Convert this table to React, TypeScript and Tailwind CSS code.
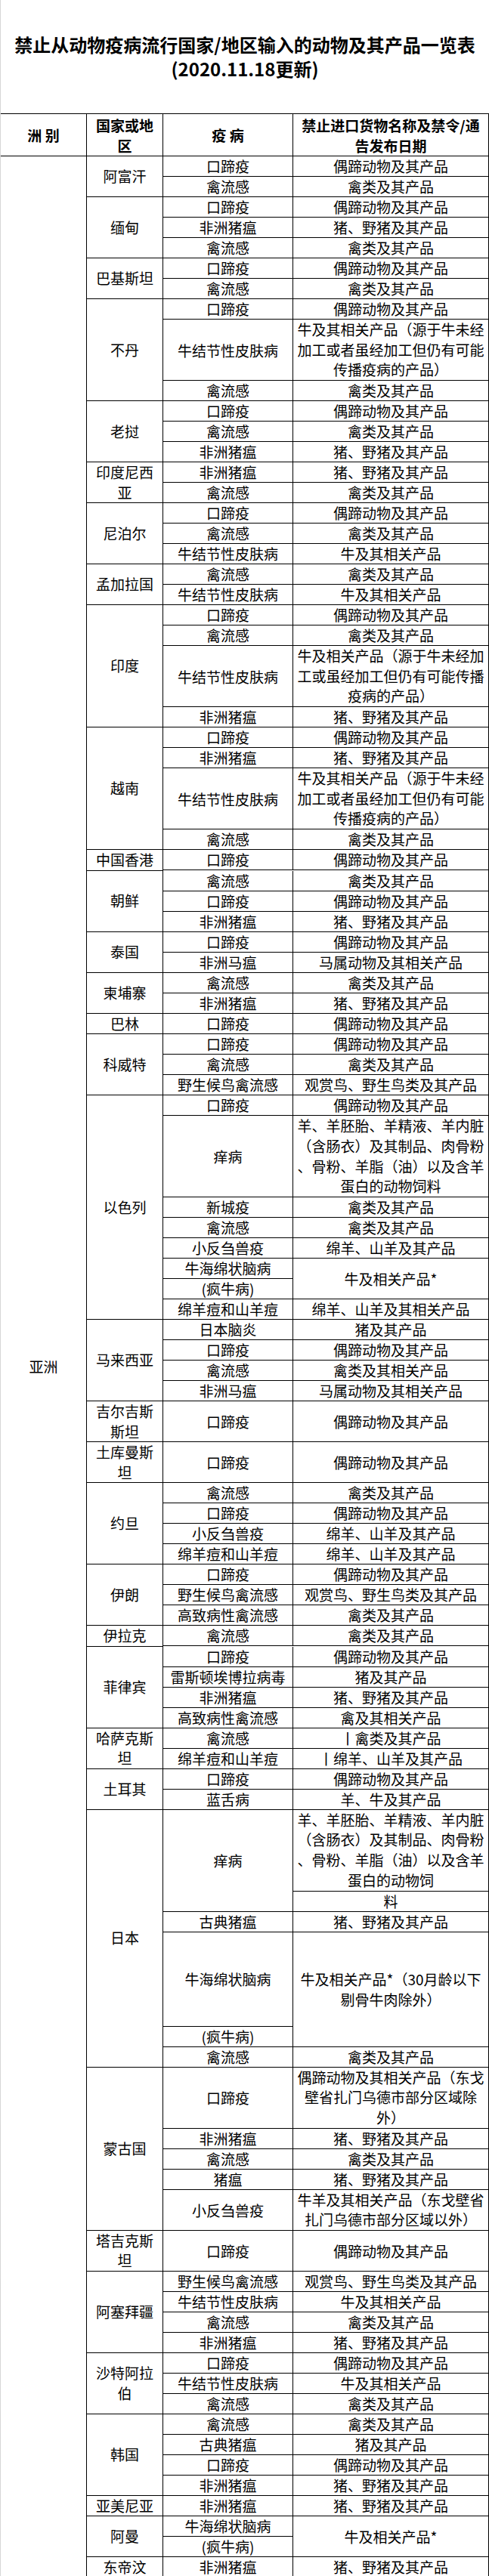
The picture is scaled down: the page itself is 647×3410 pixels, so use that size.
import React from 'react';

type Cell = { t: string; h: number };
type Row = { d: Cell[]; p: Cell[] };
type Group = { name: string; rows: Row[] };

const L = 27;

const r = (d: string, p: string, n = 1): Row => ({
  d: [{ t: d, h: n * L }],
  p: [{ t: p, h: n * L }],
});

const A = '偶蹄动物及其产品';
const B = '禽类及其产品';
const P = '猪、野猪及其产品';
const N = '牛及其相关产品';
const H = '马属动物及其相关产品';
const S = '绵羊、山羊及其产品';
const W = '观赏鸟、野生鸟类及其产品';
const LSD = '牛及其相关产品（源于牛未经\n加工或者虽经加工但仍有可能\n传播疫病的产品）';
const LSD_IN = '牛及相关产品（源于牛未经加\n工或虽经加工但仍有可能传播\n疫病的产品）';
const SCRAPIE = '羊、羊胚胎、羊精液、羊内脏\n（含肠衣）及其制品、肉骨粉\n、骨粉、羊脂（油）以及含羊\n蛋白的动物饲料';

const groups: Group[] = [
  { name: '阿富汗', rows: [r('口蹄疫', A), r('禽流感', B)] },
  { name: '缅甸', rows: [r('口蹄疫', A), r('非洲猪瘟', P), r('禽流感', B)] },
  { name: '巴基斯坦', rows: [r('口蹄疫', A), r('禽流感', B)] },
  { name: '不丹', rows: [r('口蹄疫', A), r('牛结节性皮肤病', LSD, 3), r('禽流感', B)] },
  { name: '老挝', rows: [r('口蹄疫', A), r('禽流感', B), r('非洲猪瘟', P)] },
  { name: '印度尼西\n亚', rows: [r('非洲猪瘟', P), r('禽流感', B)] },
  { name: '尼泊尔', rows: [r('口蹄疫', A), r('禽流感', B), r('牛结节性皮肤病', N)] },
  { name: '孟加拉国', rows: [r('禽流感', B), r('牛结节性皮肤病', N)] },
  { name: '印度', rows: [r('口蹄疫', A), r('禽流感', B), r('牛结节性皮肤病', LSD_IN, 3), r('非洲猪瘟', P)] },
  { name: '越南', rows: [r('口蹄疫', A), r('非洲猪瘟', P), r('牛结节性皮肤病', LSD, 3), r('禽流感', B)] },
  { name: '中国香港', rows: [r('口蹄疫', A)] },
  { name: '朝鲜', rows: [r('禽流感', B), r('口蹄疫', A), r('非洲猪瘟', P)] },
  { name: '泰国', rows: [r('口蹄疫', A), r('非洲马瘟', H)] },
  { name: '柬埔寨', rows: [r('禽流感', B), r('非洲猪瘟', P)] },
  { name: '巴林', rows: [r('口蹄疫', A)] },
  { name: '科威特', rows: [r('口蹄疫', A), r('禽流感', B), r('野生候鸟禽流感', W)] },
  {
    name: '以色列',
    rows: [
      r('口蹄疫', A),
      r('痒病', SCRAPIE, 4),
      r('新城疫', B),
      r('禽流感', B),
      r('小反刍兽疫', S),
      { d: [{ t: '牛海绵状脑病', h: L }, { t: '(疯牛病)', h: L }], p: [{ t: '牛及相关产品*', h: 2 * L }] },
      r('绵羊痘和山羊痘', '绵羊、山羊及其相关产品'),
    ],
  },
  { name: '马来西亚', rows: [r('日本脑炎', '猪及其产品'), r('口蹄疫', A), r('禽流感', '禽类及其相关产品'), r('非洲马瘟', H)] },
  { name: '吉尔吉斯\n斯坦', rows: [r('口蹄疫', A, 2)] },
  { name: '土库曼斯\n坦', rows: [r('口蹄疫', A, 2)] },
  { name: '约旦', rows: [r('禽流感', B), r('口蹄疫', A), r('小反刍兽疫', S), r('绵羊痘和山羊痘', S)] },
  { name: '伊朗', rows: [r('口蹄疫', A), r('野生候鸟禽流感', W), r('高致病性禽流感', B)] },
  { name: '伊拉克', rows: [r('禽流感', B)] },
  {
    name: '菲律宾',
    rows: [r('口蹄疫', A), r('雷斯顿埃博拉病毒', '猪及其产品'), r('非洲猪瘟', P), r('高致病性禽流感', '禽及其相关产品')],
  },
  { name: '哈萨克斯\n坦', rows: [r('禽流感', '丨禽类及其产品'), r('绵羊痘和山羊痘', '丨绵羊、山羊及其产品')] },
  { name: '土耳其', rows: [r('口蹄疫', A), r('蓝舌病', '羊、牛及其产品')] },
  {
    name: '日本',
    rows: [
      {
        d: [{ t: '痒病', h: 5 * L }],
        p: [
          { t: '羊、羊胚胎、羊精液、羊内脏\n（含肠衣）及其制品、肉骨粉\n、骨粉、羊脂（油）以及含羊\n蛋白的动物饲', h: 4 * L },
          { t: '料', h: L },
        ],
      },
      r('古典猪瘟', P),
      {
        d: [{ t: '牛海绵状脑病', h: 125 }, { t: '(疯牛病)', h: L }],
        p: [{ t: '牛及相关产品*（30月龄以下\n剔骨牛肉除外）', h: 125 + L }],
      },
      r('禽流感', B),
    ],
  },
  {
    name: '蒙古国',
    rows: [
      r('口蹄疫', '偶蹄动物及其相关产品（东戈\n壁省扎门乌德市部分区域除\n外）', 3),
      r('非洲猪瘟', P),
      r('禽流感', B),
      r('猪瘟', P),
      r('小反刍兽疫', '牛羊及其相关产品（东戈壁省\n扎门乌德市部分区域以外）', 2),
    ],
  },
  { name: '塔吉克斯\n坦', rows: [r('口蹄疫', A, 2)] },
  { name: '阿塞拜疆', rows: [r('野生候鸟禽流感', W), r('牛结节性皮肤病', N), r('禽流感', B), r('非洲猪瘟', P)] },
  { name: '沙特阿拉\n伯', rows: [r('口蹄疫', A), r('牛结节性皮肤病', N), r('禽流感', B)] },
  { name: '韩国', rows: [r('禽流感', B), r('古典猪瘟', '猪及其产品'), r('口蹄疫', A), r('非洲猪瘟', P)] },
  { name: '亚美尼亚', rows: [r('非洲猪瘟', P)] },
  {
    name: '阿曼',
    rows: [{ d: [{ t: '牛海绵状脑病', h: L }, { t: '(疯牛病)', h: L }], p: [{ t: '牛及相关产品*', h: 2 * L }] }],
  },
  { name: '东帝汶', rows: [r('非洲猪瘟', P)] },
];

const Lines = ({ t }: { t: string }) => (
  <div className="flex flex-col items-center">
    {t.split('\n').map((line, i) => (
      <div key={i} className="whitespace-nowrap">
        {line}
      </div>
    ))}
  </div>
);

// line height shrinks a touch so wrapped text never pushes the row taller than its border box
const BodyCell = ({ cell }: { cell: Cell }) => {
  const n = cell.t.split('\n').length;
  return (
    <div
      className="flex shrink-0 items-center justify-center overflow-hidden border-b border-black text-center"
      style={{ height: cell.h, lineHeight: `${Math.min(27, (cell.h - 1) / n)}px` }}
    >
      <Lines t={cell.t} />
    </div>
  );
};

export default function App() {
  return (
    <div
      className="w-[647px] border-l border-[#d6d6d6] bg-white text-black"
      style={{ fontFamily: '"Noto Sans CJK SC", "Noto Sans", sans-serif' }}
    >
      {/* Title */}
      <div className="flex h-[150px] flex-col items-center justify-center text-[24px] font-bold leading-[32px]">
        <div>禁止从动物疫病流行国家/地区输入的动物及其产品一览表</div>
        <div>(2020.11.18更新)</div>
      </div>

      <div className="border-r border-black text-[19px]">
        {/* Header */}
        <div className="flex h-[57px] border-y border-black font-bold leading-[27px]">
          <div className="flex w-[114px] items-center justify-center border-r border-black">洲 别</div>
          <div className="flex w-[101px] items-center justify-center border-r border-black">
            <Lines t={'国家或地\n区'} />
          </div>
          <div className="flex w-[172px] items-center justify-center border-r border-black">疫 病</div>
          <div className="flex flex-1 items-center justify-center">
            <Lines t={'禁止进口货物名称及禁令/通\n告发布日期'} />
          </div>
        </div>

        {/* Body */}
        <div className="flex">
          <div className="flex w-[114px] items-center justify-center border-r border-b border-black">亚洲</div>
          <div className="flex flex-1 flex-col">
            {groups.map((g, gi) => (
              <div key={gi} className="flex">
                <div className="flex w-[101px] items-center justify-center border-r border-b border-black text-center leading-[26.5px]">
                  <Lines t={g.name} />
                </div>
                <div className="flex flex-1 flex-col">
                  {g.rows.map((row, ri) => (
                    <div key={ri} className="flex">
                      <div className="flex w-[172px] flex-col border-r border-black">
                        {row.d.map((c, ci) => (
                          <BodyCell key={ci} cell={c} />
                        ))}
                      </div>
                      <div className="flex flex-1 flex-col">
                        {row.p.map((c, ci) => (
                          <BodyCell key={ci} cell={c} />
                        ))}
                      </div>
                    </div>
                  ))}
                </div>
              </div>
            ))}
          </div>
        </div>
      </div>
    </div>
  );
}
